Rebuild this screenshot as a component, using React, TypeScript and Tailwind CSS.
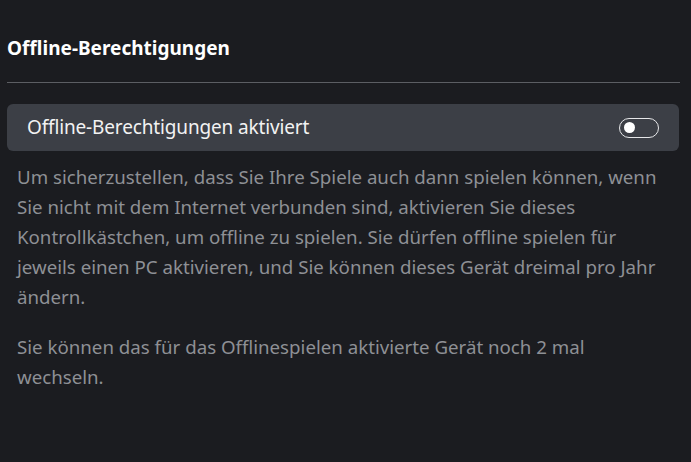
import { useState } from "react";

const Toggle = ({ on, onChange }: { on: boolean; onChange: () => void }) => (
  <button
    onClick={onChange}
    className="relative w-[40px] h-[20px] rounded-full border border-[#e6e7e9] flex items-center px-[4px]"
  >
    <span
      className={
        on
          ? "w-[11px] h-[11px] rounded-full bg-white ml-auto"
          : "w-[11px] h-[11px] rounded-full bg-white"
      }
    />
  </button>
);

export default function App() {
  const [enabled, setEnabled] = useState(false);

  return (
    <div
      className="w-[691px] h-[462px] bg-[#1b1c20] px-[7px] pt-[35px]"
      style={{ fontFamily: '"Noto Sans", "Open Sans", sans-serif' }}
    >
      <h2 className="text-[19px] font-bold text-white leading-[26px] pb-[21px] border-b border-[#5c5e63] mr-[4px]">
        Offline-Berechtigungen
      </h2>
      <div className="mt-[21px] mr-[5px] h-[47px] rounded-[6px] bg-[#3c3f46] flex items-center justify-between pl-[20px] pr-[20px]">
        <span className="text-[19px] text-[#f2f2f2] tracking-[-0.15px]">
          Offline-Berechtigungen aktiviert
        </span>
        <Toggle on={enabled} onChange={() => setEnabled(!enabled)} />
      </div>
      <div className="px-[10px] pt-[11px] text-[18.7px] leading-[30px] text-[#8e9095]">
        <p>
          Um sicherzustellen, dass Sie Ihre Spiele auch dann spielen können, wenn
          Sie nicht mit dem Internet verbunden sind, aktivieren Sie dieses
          Kontrollkästchen, um offline zu spielen. Sie dürfen offline spielen für
          jeweils einen PC aktivieren, und Sie können dieses Gerät dreimal pro Jahr
          ändern.
        </p>
        <p className="mt-[20px]">
          Sie können das für das Offlinespielen aktivierte Gerät noch 2 mal
          wechseln.
        </p>
      </div>
    </div>
  );
}
